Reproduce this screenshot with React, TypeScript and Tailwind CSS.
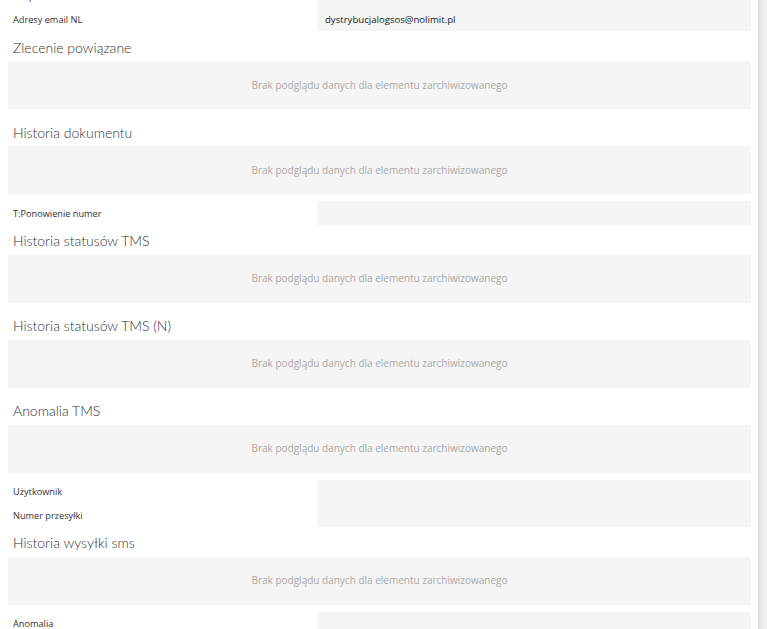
import React from "react";

type Block =
    | { kind: "fields"; rows: Array<{ label: string; value?: string }> }
    | { kind: "section"; title: string };

const EMPTY_TEXT = "Brak podglądu danych dla elementu zarchiwizowanego";

const blocks: Array<Block> = [
    { kind: "fields", rows: [{ label: "Grupa" }, { label: "Adresy email NL", value: "dystrybucjalogsos@nolimit.pl" }] },
    { kind: "section", title: "Zlecenie powiązane" },
    { kind: "section", title: "Historia dokumentu" },
    { kind: "fields", rows: [{ label: "T:Ponowienie numer" }] },
    { kind: "section", title: "Historia statusów TMS" },
    { kind: "section", title: "Historia statusów TMS (N)" },
    { kind: "section", title: "Anomalia TMS" },
    { kind: "fields", rows: [{ label: "Użytkownik" }, { label: "Numer przesyłki" }] },
    { kind: "section", title: "Historia wysyłki sms" },
    { kind: "fields", rows: [{ label: "Anomalia" }, { label: "Opis" }] },
];

function FieldGroup({ rows }: { rows: Array<{ label: string; value?: string }> }) {
    return (
        <div className="flex">
            <div className="w-[309px] shrink-0 flex flex-col">
                {rows.map((row) => (
                    <div key={row.label} className="h-[23.5px] flex items-center pt-[2px] pl-[5px] text-[9.2px] text-[#333]">
                        {row.label}
                    </div>
                ))}
            </div>
            <div className="grow bg-[#f5f5f5] flex flex-col">
                {rows.map((row) => (
                    <div key={row.label} className="h-[23.5px] flex items-center pt-[2px] pl-2 text-[9.6px] text-[#222]">
                        {row.value || ""}
                    </div>
                ))}
            </div>
        </div>
    );
}

function Section({ title }: { title: string }) {
    return (
        <div className="mb-[7px]">
            <div className="h-[30px] flex items-center pt-[2px] pl-[5px] text-[14px] font-light text-[#333] font-['Lato',sans-serif]">
                {title}
            </div>
            <div className="h-[48px] bg-[#f5f5f5] flex items-center justify-center text-[10px] text-[#a8a8a8]">
                {EMPTY_TEXT}
            </div>
        </div>
    );
}

export default function App() {
    return (
        <div className="h-screen w-full overflow-hidden bg-white flex font-['Open_Sans',sans-serif]">
            <div className="grow pl-2 pr-[7px]">
                <div className="-mt-[16px]">
                    {blocks.map((block, i) =>
                        block.kind === "fields" ? (
                            <FieldGroup key={i} rows={block.rows} />
                        ) : (
                            <Section key={i} title={block.title} />
                        )
                    )}
                </div>
            </div>
            <div className="w-[9px] shrink-0 bg-gradient-to-r from-[#d9d9d9] via-[#ececec] to-[#f1f1f1]" />
        </div>
    );
}
